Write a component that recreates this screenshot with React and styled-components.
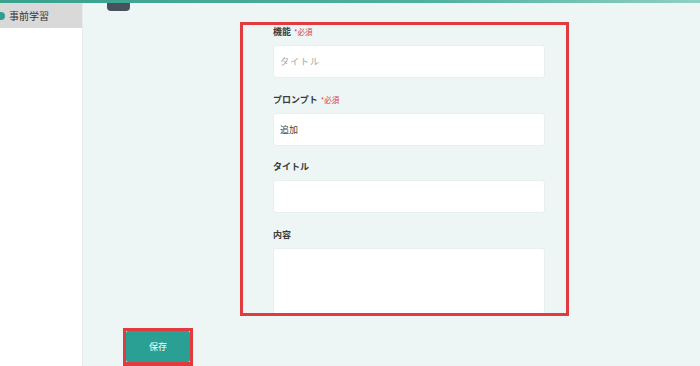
import React from "react";
import styled, { createGlobalStyle } from "styled-components";

const Global = createGlobalStyle`
  html, body { margin: 0; padding: 0; }
  body {
    width: 700px; height: 366px; overflow: hidden;
    font-family: "Noto Sans CJK JP", "Noto Sans", sans-serif;
    background: #edf4f4;
  }
  * { box-sizing: border-box; }
`;

const Page = styled.div`
  display: flex; flex-direction: column;
  width: 700px; height: 366px; overflow: hidden;
`;

const TopBar = styled.div`
  height: 3px; flex: none;
  background: linear-gradient(90deg, #3aa18f 0%, #4eb09d 60%, #8fd0c2 100%);
`;

const Body = styled.div`
  flex: 1; display: flex; min-height: 0;
`;

const Sidebar = styled.aside`
  width: 83px; flex: none; background: #fff;
  border-right: 1px solid #e6ecec;
`;

const NavItem = styled.div`
  height: 25px; display: flex; align-items: center; gap: 4px;
  background: #d9d9d9; color: #333; font-size: 10px;
`;

const Dot = styled.span`
  width: 5px; height: 8px; border-radius: 0 4px 4px 0;
  background: #2fa090; flex: none;
`;

const Main = styled.main`
  flex: 1; position: relative; background: #eef5f5;
  display: flex; flex-direction: column;
  padding: 19px 0 0 40px;
`;

const Tab = styled.div`
  position: absolute; left: 24px; top: 0;
  width: 23px; height: 8px; border-radius: 0 0 4px 4px;
  background: #46535f;
`;

const FormBox = styled.section`
  margin-left: 117px; width: 329px; height: 294px;
  border: 3px solid #e23b3f; overflow: hidden;
  padding: 0 21px 0 30px;
  display: flex; flex-direction: column; gap: 14.7px;
`;

const Field = styled.div`
  display: flex; flex-direction: column; gap: 6px;
`;

const Label = styled.label`
  height: 14px; line-height: 14px; font-size: 9px; font-weight: 700; color: #3a3a3a;
  display: flex; align-items: center; gap: 3px;
`;

const Req = styled.span`
  color: #d33b45; font-size: 7.5px; font-weight: 400;
`;

const Input = styled.div`
  height: 33px; background: #fff; border-radius: 3px;
  border: 1px solid #e9efef;
  display: flex; align-items: center; padding-left: 6px;
  font-size: 9px; color: ${(p) => (p.$placeholder ? "#a3a3a3" : "#444")};
  letter-spacing: ${(p) => (p.$placeholder ? "1px" : "0")};
`;

const TextArea = styled.div`
  height: 70px; background: #fff; border-radius: 3px; border: 1px solid #e9efef;
`;

const SaveWrap = styled.div`
  margin-top: 12px; width: 70px; height: 38px;
  border: 3px solid #e23b3f; border-bottom-width: 4px;
`;

const SaveButton = styled.button`
  width: 100%; height: 100%; border: none; border-radius: 2px;
  background: #2a9f94; color: #fff; font-size: 9px;
  font-family: inherit; padding: 0;
`;

export default function App() {
  return (
    <Page>
      <Global />
      <TopBar />
      <Body>
        <Sidebar>
          <NavItem>
            <Dot />
            事前学習
          </NavItem>
        </Sidebar>
        <Main>
          <Tab />
          <FormBox>
            <Field>
              <Label>機能<Req>*必須</Req></Label>
              <Input $placeholder>タイトル</Input>
            </Field>
            <Field>
              <Label>プロンプト<Req>*必須</Req></Label>
              <Input>追加</Input>
            </Field>
            <Field>
              <Label>タイトル</Label>
              <Input />
            </Field>
            <Field>
              <Label>内容</Label>
              <TextArea />
            </Field>
          </FormBox>
          <SaveWrap>
            <SaveButton>保存</SaveButton>
          </SaveWrap>
        </Main>
      </Body>
    </Page>
  );
}
